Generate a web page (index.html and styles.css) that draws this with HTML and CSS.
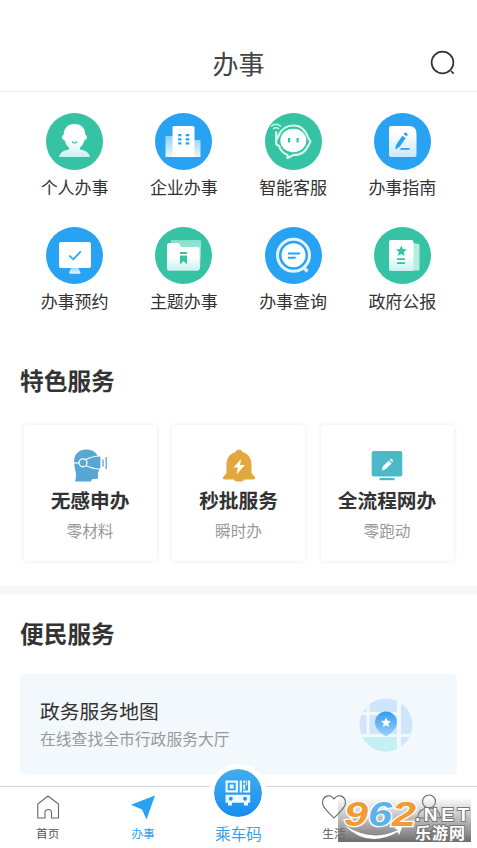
FILE: index.html
```html
<!DOCTYPE html>
<html lang="zh-CN">
<head>
<meta charset="utf-8">
<title>办事</title>
<link rel="stylesheet" href="styles.css">
</head>
<body>
<div class="app">
<header class="header">
  <h1>办事</h1>
  <svg class="search" width="28" height="28" viewBox="0 0 28 28"><circle cx="13.5" cy="13.5" r="10.9"/><path d="M22 22l2.7 2.7"/></svg>
</header>

<svg class="defs" width="0" height="0">
  <defs>
    <linearGradient id="fade" x1="0" y1="0" x2="0" y2="1"><stop offset=".5" stop-color="#fff"/><stop offset="1" stop-color="#c9f0f0"/></linearGradient>
    <linearGradient id="fadeBlue" x1="0" y1="0" x2="0" y2="1"><stop offset=".2" stop-color="#fff"/><stop offset="1" stop-color="#cbe8fd"/></linearGradient>
    <linearGradient id="soft" x1="0" y1="0" x2="0" y2="1"><stop offset="0" stop-color="#8fd0fb"/><stop offset="1" stop-color="#e8f6ff"/></linearGradient>
    <linearGradient id="softGreen" x1="0" y1="0" x2="0" y2="1"><stop offset="0" stop-color="#82dfcb"/><stop offset="1" stop-color="#d2f5ee"/></linearGradient>
    <linearGradient id="pin" x1="0" y1="0" x2="0" y2="1"><stop offset="0" stop-color="#2f9ff0"/><stop offset="1" stop-color="#9fd0fa"/></linearGradient>
  </defs>
</svg>

<nav class="services">
  <a class="service"><svg viewBox="0 0 57 57"><circle class="green" cx="28.5" cy="28.5" r="28.5"/><path fill="url(#fade)" d="M28.500 11c-7.300 0-10.800 4.700-10.800 11-2.500.3-2.300 4.700.9 5.300.8 3.500 2.400 5.700 4.400 7.400v1.500c-2.500 1.200-8.500 1.200-10 7.800h31c-1.500-6.600-7.500-6.600-10-7.800v-1.500c2-1.700 3.600-3.900 4.400-7.400 3.200-.6 3.400-5 .9-5.300 0-6.300-3.500-11-10.800-11z"/><path class="gline" d="M26 28.500q2.600 3 5.200 0" stroke-width="1.200"/></svg><span>个人办事</span></a>
  <a class="service"><svg viewBox="0 0 57 57"><circle class="blue" cx="28.500" cy="28.500" r="28.500"/><path fill="url(#soft)" d="M10.500 23h8v21h-8zM39 27h6.500v17H39z"/><path fill="#fff" d="M19 13h19a1.500 1.500 0 0 1 1.500 1.500V44H17.500V14.500A1.500 1.500 0 0 1 19 13z"/><path class="blue" d="M23.200 21h3.200v2.200h-3.200zM30.700 21h3.600v2.200h-3.600zM23.200 25.200h3.200v2.200h-3.200zM30.700 25.200h3.600v2.200h-3.600zM23.200 29.300h3.200v2.200h-3.200zM30.700 29.300h3.600v2.200h-3.600z"/></svg><span>企业办事</span></a>
  <a class="service"><svg viewBox="0 0 57 57"><circle class="green" cx="28.500" cy="28.500" r="28.500"/><path d="M11.200 18.500V31l2.800 2C15.500 38 19 40.500 22.500 42v3l5.500-2.800c8 0 12.500-3.500 15-9l2.500-4.700-2.500-4C40.500 17 36 12.500 28.500 12.500S16 16.500 13.500 23L11.500 27" fill="none" stroke="#d5f7ef" stroke-width="2.200" stroke-linejoin="round"/><ellipse cx="28.300" cy="27.500" rx="13" ry="11.800" fill="#fff"/><path class="green" d="M23 25h2.200v4.500H23zM31.500 25h2.200v4.500h-2.200z"/><path d="M6 13.500q5-4.500 10 0M8 16q3-2.500 6 0" fill="none" stroke="#c9f5e8" stroke-width="1.500"/></svg><span>智能客服</span></a>
  <a class="service"><svg viewBox="0 0 57 57"><circle class="blue" cx="28.500" cy="28.500" r="28.500"/><path fill="url(#fadeBlue)" d="M17 13h18q7.500 0 7.500 7.500V42a2 2 0 0 1-2 2H17a2 2 0 0 1-2-2V15a2 2 0 0 1 2-2z"/><path class="blue" d="M21 36.500l1.300-5 6-8.800 3.400 2.400-6.200 9zM29.500 21l1-1.200q2-1 3.200 1.500l-.8 2.200zM27 35h8.500v1.800h-9.700z"/></svg><span>办事指南</span></a>
  <a class="service"><svg viewBox="0 0 57 57"><circle class="blue" cx="28.500" cy="28.500" r="28.500"/><path fill="url(#soft)" d="M25.500 40h6.500l2.500 5.500q0 1.200-1 1.200h-9.500q-1 0-1-1.200z"/><rect x="13" y="15" width="32" height="26" rx="2" fill="#fff"/><path d="M23.300 28.500l4 3.800 7.500-8" fill="none" stroke="#28a2f2" stroke-width="1.700"/></svg><span>办事预约</span></a>
  <a class="service"><svg viewBox="0 0 57 57"><circle class="green" cx="28.500" cy="28.500" r="28.500"/><path fill="url(#softGreen)" d="M16 13h29q1.500 0 1.300 1.500L45 42H16z"/><path fill="url(#fade)" d="M14 16h9q2 0 3 4h16.500q2 0 2 2v20q0 1.700-2 1.700H14q-2 0-2-1.700V18q0-2 2-2z"/><path class="green" d="M25 25h7v2h-7zM25 28.500h7v9L28.500 34 25 37.500z"/></svg><span>主题办事</span></a>
  <a class="service"><svg viewBox="0 0 57 57"><circle class="blue" cx="28.500" cy="28.500" r="28.500"/><path d="M38 40l4.500 4.500" stroke="#d5edff" stroke-width="3.500"/><circle cx="28.500" cy="28.300" r="16" fill="none" stroke="#e5f4ff" stroke-width="3"/><circle cx="28.500" cy="28.300" r="12" fill="#fff"/><path class="blue" d="M23 25.500h12.500l-.8 2H23zM23 29.800h8l-.7 2H23z"/></svg><span>办事查询</span></a>
  <a class="service"><svg viewBox="0 0 57 57"><circle class="green" cx="28.500" cy="28.500" r="28.500"/><path d="M36 15.500l8.500 1.500q1 0 1 1.300V42q0 1.500-1 1.500H36z" fill="#b5eee0"/><path fill="url(#fade)" d="M17 13h20.500a2 2 0 0 1 2 2v29H17a2 2 0 0 1-2-2V15a2 2 0 0 1 2-2z"/><path class="green" d="M27.300 18.500l1.600 3.600 3.800.4-2.900 2.600.9 3.800-3.400-2-3.400 2 .9-3.800-2.900-2.600 3.800-.4zM23 31.300h8v1.600h-8zM23 35.300h8v1.600h-8z"/></svg><span>政府公报</span></a>
</nav>

<section class="featured">
  <h2>特色服务</h2>
  <div class="cards">
    <article class="card"><svg viewBox="0 0 36 36"><path fill="#57a7d2" d="M2 15C2 7 7 2.500 14.500 2.500c6.500 0 10.500 3.500 12 8.500l1 11-1.500 4v4.500q0 1.500-2 1.500h-4l-1 2.500H3q2-7 0-12z"/><path d="M1 16h6.500" stroke="#fff" stroke-width="1.200"/><path d="M13.500 12.500q8-3.500 14-3.500 1.500 0 1.500 1.500v10q0 1.500-1.500 1.500-6 0-14-3.500" fill="#57a7d2" stroke="#fff" stroke-width="1.200"/><circle cx="11" cy="15.800" r="4" fill="#57a7d2" stroke="#fff" stroke-width="1.200"/><path d="M31 12.500v7M34.200 10v12" stroke="#57a7d2" stroke-width="1.300"/></svg><h3>无感申办</h3><p>零材料</p></article>
    <article class="card"><svg viewBox="0 0 36 36"><path fill="#e2a83e" d="M18 2.500c1.500 0 2.700.8 3.500 2.500C28 7 31 12 30.500 20v6l3.300 4q1 2.500-1.800 2.500h-9q0 2-5 2t-5-2H4q-2.800 0-1.800-2.500l3.300-4v-6C5 12 8 7 14.500 5c.8-1.700 2-2.500 3.500-2.500z"/><path fill="#fff" d="M20 12l-7.500 8.500H17L15.500 27.500 24 18h-5z"/></svg><h3>秒批服务</h3><p>瞬时办</p></article>
    <article class="card"><svg viewBox="0 0 36 36"><rect x="2.700" y="4" width="30.600" height="25.500" rx="2" fill="#4bb9c7"/><path fill="#4bb9c7" d="M10.500 31h15v2.200h-15z"/><path fill="#fff" d="M12.800 23.500l1-4.200 6-5.500 2.800 2.800-6 5.700zM20.700 12.800l1.300-1q2 .3 2 2.300l-.8 1.200z"/></svg><h3>全流程网办</h3><p>零跑动</p></article>
  </div>
</section>

<section class="convenience">
  <h2>便民服务</h2>
  <a class="map-card">
    <div><h3>政务服务地图</h3><p>在线查找全市行政服务大厅</p></div>
    <svg width="54" height="54" viewBox="0 0 54 54"><clipPath id="disc"><circle cx="27" cy="27" r="26.500"/></clipPath><g clip-path="url(#disc)"><path fill="#cfe5fc" d="M0 0h54v54H0z"/><path fill="#c4eff4" d="M0 38h38v16H0z"/><path d="M0 15.500h38M0 37.500h54M9 0v37" fill="none" stroke="#f3f8fd" stroke-width="3"/><path d="M40 0v54" stroke="#f3f8fd" stroke-width="4.200"/></g><path fill="url(#pin)" d="M27 13.500a11 11 0 0 1 11 11c0 6-5 10-11 14-6-4-11-8-11-14a11 11 0 0 1 11-11z"/><path fill="#fff" d="M27 19.500l1.500 3.200 3.400.3-2.500 2.400.7 3.500-3.100-1.700-3.100 1.700.7-3.500-2.500-2.400 3.400-.3z"/></svg>
  </a>
</section>

<footer class="tabs">
  <a class="tab"><svg viewBox="0 0 26 26"><path d="M2.800 24V10L13 2l10.500 8v14h-7v-5q0-3.500-3.300-3.500T10 19v5z"/></svg><span>首页</span></a>
  <a class="tab active"><svg viewBox="0 0 26 26"><path d="M25 1.500L16.500 25.500 12 15.500 1 10.800z"/></svg><span>办事</span></a>
  <a class="tab ride"><i><svg viewBox="0 0 26 26"><path fill="#eafaff" fill-rule="evenodd" d="M.500.500h12.500v12H.500zM2.700 2.700v7.600h8V2.700zM4.700 4.500h4v4h-4zM14.700.500h2.200v12h-2.200zM18.200.500h2v2.800h-2zM18.200 4.500h2v5h-2zM23 .500h2.200v12h-7v-2H23zM21.200.500h1v5h-1zM.500 14.800h24.700v8H23v2.700h-4v-2.700H7v2.700H3v-2.700H.500zM5.700 16.800a2 2 0 1 0 .1 0zM20 16.800a2 2 0 1 0 .1 0z"/></svg></i><span>乘车码</span></a>
  <a class="tab"><svg viewBox="0 0 26 26"><path d="M13 5C9-1 1.500 2 1.500 9c0 5 6.500 9.500 11.500 15C18 18.500 24.500 14 24.500 9 24.500 2 17 -1 13 5z"/></svg><span>生活</span></a>
  <a class="tab"><svg viewBox="0 0 26 26"><circle cx="13" cy="7.500" r="6.500"/><path d="M1.500 24q1-10 11.500-10t11.500 10z"/></svg><span>我的</span></a>
</footer>

<svg class="watermark" width="134" height="46" viewBox="0 0 134 46">
  <defs><linearGradient id="shade" x1="0" y1="0" x2="0" y2="1"><stop offset="0" stop-color="#777" stop-opacity="0"/><stop offset=".5" stop-color="#777" stop-opacity=".5"/><stop offset="1" stop-color="#666" stop-opacity=".95"/></linearGradient></defs>
  <path fill="url(#shade)" d="M0 0h133v45H0z"/>
  <path d="M6 28Q34 46 60 33l-4-2 9-3-4 10-1.500-3Q30 52 6 28z" fill="#fff"/>
  <g class="digits"><text x="6" y="29" textLength="24" lengthAdjust="spacingAndGlyphs" fill="#f39a32">9</text><text x="30" y="29" textLength="24" lengthAdjust="spacingAndGlyphs" fill="#5cb2ea">6</text><text x="54" y="29" textLength="24" lengthAdjust="spacingAndGlyphs" fill="#f39a32">2</text></g>
  <text class="net" x="77" y="24" textLength="54" lengthAdjust="spacing">.NET</text>
  <text class="site" x="77" y="42" textLength="50" lengthAdjust="spacing">乐游网</text>
</svg>
</div>
</body>
</html>
```
FILE: styles.css
```css
* { box-sizing: border-box; }
body, h1, h2, h3, p { margin: 0; }
body {
  font-family: "Noto Sans CJK SC", sans-serif;
  color: #333;
  background: #fff;
}
.app {
  position: relative;
  height: 848px;
  overflow: hidden;
}
.defs { position: absolute; }
.header {
  height: 92px;
  padding-top: 34px;
  border-bottom: 1px solid #ededed;
  display: grid;
  grid-template-columns: 1fr auto 1fr;
  align-items: center;
}
.header h1 {
  grid-column: 2;
  font-size: 26px;
  line-height: 56px;
  font-weight: 400;
  color: #444;
}
.search {
  justify-self: end;
  margin: 1px 20px 0 0;
  fill: none;
  stroke: #333;
  stroke-width: 1.7;
}
.services {
  display: grid;
  grid-template-columns: repeat(4, 1fr);
  grid-auto-rows: 114px;
  padding: 21px 20px 0;
}
.service {
  display: flex;
  flex-direction: column;
  align-items: center;
}
.service svg { width: 57px; height: 57px; }
.service span {
  font-size: 17px;
  line-height: 24px;
  margin-top: 5px;
  white-space: nowrap;
}
.green { fill: #36c3a4; }
.blue { fill: #28a2f2; }
.gline { fill: none; stroke: #36c3a4; }
h2 {
  font-size: 23.700px;
  line-height: 36px;
  font-weight: 700;
  padding-left: 20px;
}
.featured {
  padding-top: 21px;
  height: 245px;
}
.cards {
  display: grid;
  grid-template-columns: repeat(3, 133px);
  gap: 15.500px;
  justify-content: center;
  margin-top: 27px;
}
.card {
  display: flex;
  flex-direction: column;
  align-items: center;
  height: 136px;
  padding-top: 22px;
  border-radius: 4px;
  box-shadow: 0 0 5px rgba(0, 0, 0, .09);
}
.card svg { width: 36px; height: 36px; }
.card h3 {
  font-size: 19.700px;
  line-height: 28px;
  margin-top: 3px;
}
.card p {
  font-size: 15.700px;
  line-height: 22px;
  margin-top: 6px;
  color: #999;
}
.convenience {
  border-top: 8px solid #f6f6f6;
  padding-top: 21px;
}
.map-card {
  display: flex;
  align-items: center;
  justify-content: space-between;
  height: 101px;
  margin: 23px 20px 0;
  padding: 0 44px 0 20px;
  background: #f3f8fd;
  border-radius: 5px;
}
.map-card h3 {
  font-size: 19.800px;
  line-height: 28px;
  font-weight: 400;
}
.map-card p {
  font-size: 15.800px;
  line-height: 28px;
  color: #999;
}
.tabs {
  position: absolute;
  left: 0;
  right: 0;
  bottom: 0;
  height: 62px;
  display: grid;
  grid-template-columns: repeat(5, 1fr);
  background: #fff;
  border-top: 1px solid #d4d4d4;
}
.tab {
  display: flex;
  flex-direction: column;
  align-items: center;
  padding-top: 7px;
  font-size: 11.700px;
  line-height: 18px;
  color: #555;
}
.tab > svg {
  width: 26px;
  height: 26px;
  fill: none;
  stroke: #666;
  stroke-width: 1.1;
}
.tab span { margin-top: 4px; }
.active { color: #28a2f2; }
.active > svg { fill: #28a2f2; stroke: none; }
.ride {
  padding: 0;
  color: #3c9fe4;
  font-size: 15.600px;
  line-height: 22px;
}
.ride i {
  display: flex;
  align-items: center;
  justify-content: center;
  width: 58px;
  height: 58px;
  margin-top: -23px;
  border: 5px solid #fff;
  border-radius: 50%;
  background: linear-gradient(#43adef, #188df0) padding-box;
}
.ride i svg { width: 26px; height: 26px; }
.ride span { margin-top: 0; }
.watermark {
  position: absolute;
  left: 338px;
  top: 797px;
}
.digits {
  font: italic 700 35px "Liberation Sans", sans-serif;
  stroke: #fff;
  stroke-width: 2.5px;
  paint-order: stroke;
}
.net, .site {
  fill: #fff;
  stroke: #777;
  stroke-width: 2px;
  paint-order: stroke;
}
.net { font: 700 19px "Liberation Sans", sans-serif; }
.site { font: 700 16px "Noto Sans CJK SC", sans-serif; }
```
